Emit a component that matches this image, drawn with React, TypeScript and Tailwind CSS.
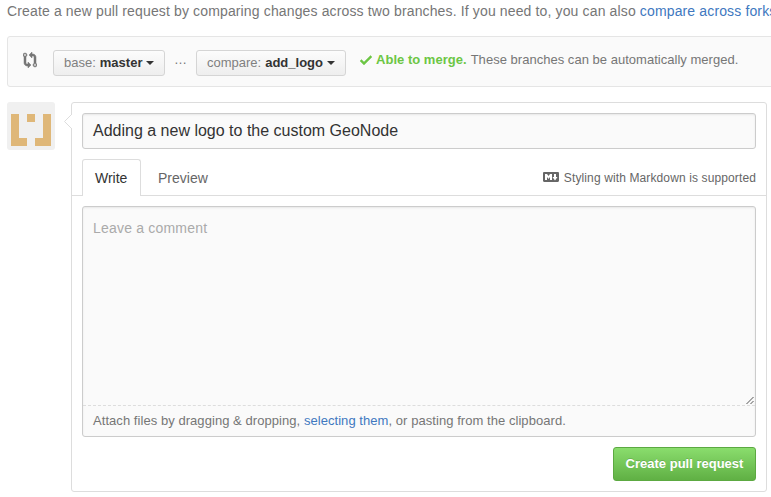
import React from "react";

function GitCompareIcon() {
  return (
    <svg width="14" height="16" viewBox="0 0 14 16" fill="#767676" stroke="#767676" strokeWidth="0.5" className="block">
      <path d="M5 12H4c-.27-.02-.48-.11-.69-.31-.21-.2-.3-.42-.31-.69V4.72A1.993 1.993 0 0 0 2 1a1.993 1.993 0 0 0-1 3.72V11c.03.78.34 1.47.94 2.06.6.59 1.28.91 2.06.94h1v2l3-3-3-3v2zM2 1.8c.66 0 1.2.55 1.2 1.2 0 .65-.55 1.2-1.2 1.2C1.35 4.2.8 3.65.8 3c0-.65.55-1.2 1.2-1.2zm11 9.48V5c-.03-.78-.34-1.47-.94-2.06-.6-.59-1.28-.91-2.06-.94H9V0L6 3l3 3V4h1c.27.02.48.11.69.31.21.2.3.42.31.69v6.28A1.993 1.993 0 0 0 12 15a1.993 1.993 0 0 0 1-3.72zm-1 2.92c-.66 0-1.2-.55-1.2-1.2 0-.65.55-1.2 1.2-1.2.65 0 1.2.55 1.2 1.2 0 .65-.55 1.2-1.2 1.2z" />
    </svg>
  );
}

function Caret() {
  return <span className="-mt-px ml-1 h-0 w-0 border-x-4 border-t-4 border-x-transparent border-t-[#333333]" />;
}

function BranchButton({ label, name, className }: { label: string; name: string; className: string }) {
  return (
    <button
      className={`flex h-[26px] shrink-0 items-center rounded-[3px] border border-[#d5d5d5] bg-linear-to-b from-[#fcfcfc] to-[#eeeeee] pl-[10px] text-[13px] leading-[24px] whitespace-nowrap ${className}`}
    >
      <span className="text-[#808080]">{label}</span>
      <span className="ml-1 font-bold text-[#333333]">{name}</span>
      <Caret />
    </button>
  );
}

function Avatar() {
  return (
    <svg width="48" height="48" viewBox="0 0 48 48" shapeRendering="crispEdges" className="block shrink-0 rounded-[3px] bg-[#f0f0f0]">
      <path fill="#dfb778" d="M4 12h8v24h8v8H4zM20 12h8v8h-8zM36 12h8v32H28v-8h8z" />
    </svg>
  );
}

export default function App() {
  return (
    <div className="h-[497px] w-[771px] overflow-hidden bg-white pl-[7px] font-['Liberation_Sans',Arial,sans-serif] text-[#767676]">
      <p className="h-9 text-[14px] leading-[22px] tracking-[0.138px] whitespace-nowrap">
        Create a new pull request by comparing changes across two branches. If you need to, you can also{" "}
        <a className="text-[#4078c0]">compare across forks</a>.
      </p>

      <div className="flex h-[51px] w-[980px] rounded-[3px] border border-[#e5e5e5] bg-[#fafafa] pl-[15px]">
        <div className="mt-[15px] w-[30px]">
          <GitCompareIcon />
        </div>
        <BranchButton label="base:" name="master" className="mt-[13px] w-[112px]" />
        <span className="mt-[13px] w-[31px] text-center text-[13px] leading-[20px]">…</span>
        <BranchButton label="compare:" name="add_logo" className="mt-[13px] w-[150px]" />
        <div className="mt-[13px] ml-[14px] flex h-5 items-center text-[13px] leading-5 tracking-[0.025px] whitespace-nowrap">
          <svg width="12" height="16" viewBox="0 0 12 16" fill="#6cc644" stroke="#6cc644" strokeWidth="0.4" className="mr-1 -mt-px">
            <path d="M12 5l-8 8-4-4 1.5-1.5L4 10l6.5-6.5z" />
          </svg>
          <strong className="mr-1 font-bold text-[#6cc644]">Able to merge.</strong>
          <span>These branches can be automatically merged.</span>
        </div>
      </div>

      <div className="mt-[15px] flex">
        <Avatar />
        <div className="relative ml-4 h-[390px] w-[696px] rounded-[3px] border border-[#dddddd] bg-white">
          <svg width="8" height="16" viewBox="0 0 8 16" className="absolute top-[11px] -left-[8px]">
            <path d="M8 0L0.5 7.5L8 15" fill="#ffffff" stroke="#dddddd" />
          </svg>
          <div className="mx-[10px] mt-[10px] h-9 rounded-[3px] border border-[#cccccc] bg-[#fafafa] px-[10px] text-[16px] leading-[34px] text-[#333333] shadow-[inset_0_1px_2px_rgba(0,0,0,0.075)]">
            Adding a new logo to the custom GeoNode
          </div>

          <div className="mt-[10px] flex h-[37px] border-b border-[#dddddd] px-[10px] text-[14px] leading-[36px]">
            <div className="h-[37px] w-[59px] rounded-t-[3px] border border-b-0 border-[#dddddd] bg-white pl-3 text-[#333333]">
              Write
            </div>
            <div className="ml-[17px] pt-px text-[#666666]">Preview</div>
            <div className="ml-auto flex items-center pt-px text-[12px] tracking-[0.12px] text-[#666666]">
              <svg width="16" height="16" viewBox="0 0 16 16" fill="#666666" className="mr-[5px] -mt-px">
                <path d="M14.85 3H1.15C.52 3 0 3.52 0 4.15v7.69C0 12.48.52 13 1.15 13h13.69c.64 0 1.15-.52 1.15-1.15v-7.7C16 3.52 15.48 3 14.85 3zM9 11H7V8L5.5 9.92 4 8v3H2V5h2l1.5 2L7 5h2v6zm2.99.5L9.5 8H11V5h2v3h1.5l-2.51 3.5z" />
              </svg>
              Styling with Markdown is supported
            </div>
          </div>

          <div className="mx-[10px] mt-[10px] h-[231px] rounded-[3px] border border-[#cccccc] bg-[#fafafa] shadow-[inset_0_1px_2px_rgba(0,0,0,0.075)]">
            <div className="flex h-[198px] items-end justify-between">
              <span className="self-start pt-[11px] pl-[10px] text-[14px] leading-5 tracking-[0.2px] text-[#aaaaaa]">
                Leave a comment
              </span>
              <svg width="9" height="9" viewBox="0 0 9 9" stroke="#555555">
                <path d="M0.5 8L7.5 1M4.5 8L7.5 5" />
              </svg>
            </div>
            <div className="border-t border-dashed border-[#dddddd] pt-[5px] pl-[10px] text-[13px] leading-5 tracking-[0.055px]">
              Attach files by dragging &amp; dropping, <a className="text-[#4078c0]">selecting them</a>, or pasting from
              the clipboard.
            </div>
          </div>

          <button className="mt-[10px] mr-[10px] ml-auto block h-[34px] w-[143px] rounded-[3px] border border-[#5ca941] bg-linear-to-b from-[#8add6d] to-[#60b044] text-center text-[13px] leading-[32px] font-bold whitespace-nowrap text-white [text-shadow:0_-1px_0_rgba(0,0,0,0.15)]">
            Create pull request
          </button>
        </div>
      </div>
    </div>
  );
}
